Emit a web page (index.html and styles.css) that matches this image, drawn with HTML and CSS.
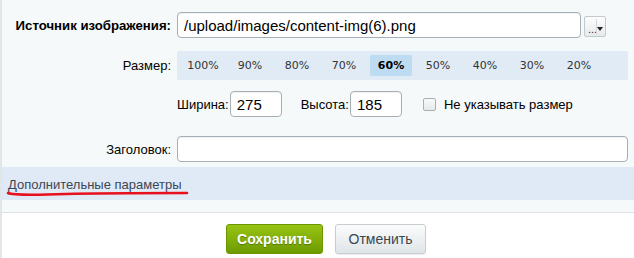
FILE: index.html
```html
<!DOCTYPE html>
<html lang="ru">
<head>
  <meta charset="UTF-8">
  <title>Изображение</title>
  <link rel="stylesheet" href="styles.css">
</head>
<body>
  <div class="dialog">
    <div class="form">
      <div class="row row-src">
        <label class="label label-bold">Источник изображения:</label>
        <div class="field field-src">
          <input type="text" class="input input-src" value="/upload/images/content-img(6).png">
          <button class="browse"><span class="dots">...</span><span class="arrow"></span></button>
        </div>
      </div>

      <div class="row row-size">
        <label class="label">Размер:</label>
        <div class="sizes">
          <span class="size">100%</span>
          <span class="size">90%</span>
          <span class="size">80%</span>
          <span class="size">70%</span>
          <span class="size active">60%</span>
          <span class="size">50%</span>
          <span class="size">40%</span>
          <span class="size">30%</span>
          <span class="size">20%</span>
        </div>
      </div>

      <div class="row row-dims">
        <span></span>
        <div class="dims">
          <span class="dim-label">Ширина:</span>
          <input type="text" class="input input-small" value="275">
          <span class="dim-label dim-gap">Высота:</span>
          <input type="text" class="input input-small" value="185">
          <label class="check"><span class="box"></span>Не указывать размер</label>
        </div>
      </div>

      <div class="row row-title">
        <label class="label">Заголовок:</label>
        <input type="text" class="input input-title">
      </div>
    </div>

    <div class="more">
      <a class="more-link">Дополнительные параметры</a>
      <svg class="mark" width="184" height="8" viewBox="0 0 184 8">
        <path d="M2 3 C 6 5, 30 5, 60 4 S 150 3, 181 3" stroke="#e8101e" stroke-width="2.6" fill="none" stroke-linecap="round"/>
      </svg>
    </div>

    <div class="footer">
      <button class="btn btn-save">Сохранить</button>
      <button class="btn btn-cancel">Отменить</button>
    </div>
  </div>
</body>
</html>
```

FILE: styles.css
```css
body {
  margin: 0;
  font-family: "Liberation Sans", Arial, sans-serif;
  font-size: 13px;
  color: #000;
  background: #fff;
}

.dialog {
  border-left: 2px solid #e1e6e8;
  height: 258px;
  box-sizing: border-box;
}

.form {
  background: #f5f9f9;
  padding: 12px 6px 5px 0;
}

.row {
  display: grid;
  grid-template-columns: 169px 1fr;
  column-gap: 6px;
  align-items: center;
}

.label {
  text-align: right;
  color: #000;
  font-size: 13px;
}

.label-bold {
  font-weight: bold;
  font-size: 13.2px;
}

.input {
  height: 26px;
  box-sizing: border-box;
  border: 1px solid #a6aeb6;
  border-radius: 4px;
  background: #fff;
  font-family: "Liberation Sans", Arial, sans-serif;
  font-size: 15px;
  padding: 0 6px;
  color: #000;
  box-shadow: inset 0 1px 1px rgba(0, 0, 0, 0.06);
}

.field-src {
  display: flex;
  align-items: center;
  gap: 3px;
}

.input-src {
  width: 404px;
}

.browse {
  width: 22px;
  height: 21px;
  margin-top: 2px;
  padding: 0;
  border: 1px solid #c3c9cc;
  border-radius: 2px;
  background: linear-gradient(#fdfdfd, #e7eaeb);
  display: flex;
  align-items: flex-end;
  position: relative;
}

.dots {
  font-size: 11px;
  line-height: 14px;
  padding-left: 3px;
  color: #333;
}

.arrow {
  position: absolute;
  right: 2px;
  top: 10px;
  border-left: 3px solid transparent;
  border-right: 3px solid transparent;
  border-top: 4px solid #222;
}

.browse::after {
  content: "";
  position: absolute;
  right: 8px;
  top: 2px;
  bottom: 2px;
  border-left: 1px solid #d3d8da;
}

.row-size {
  margin-top: 13px;
}

.sizes {
  background: #e0ebf6;
  height: 29px;
  display: flex;
  align-items: center;
  padding-left: 5px;
  gap: 5px;
  border-radius: 2px;
  font-family: "DejaVu Sans", Verdana, sans-serif;
  font-size: 11px;
  color: #333;
}

.size {
  width: 42px;
  text-align: center;
  line-height: 21px;
  border-radius: 2px;
}

.size.active {
  background: #bddcf2;
  font-weight: bold;
  color: #000;
}

.row-dims {
  margin-top: 11px;
}

.dims {
  display: flex;
  align-items: center;
}

.dim-label {
  font-size: 13px;
  margin-right: 1px;
}

.dim-gap {
  margin-left: 19px;
}

.input-small {
  width: 52px;
}

.check {
  display: flex;
  align-items: center;
  margin-left: 21px;
  font-size: 13px;
}

.box {
  width: 11px;
  height: 11px;
  border: 1px solid #a9b0b4;
  border-radius: 2px;
  background: linear-gradient(#fafafa, #e6e9ea);
  margin-right: 8px;
}

.row-title {
  margin-top: 19px;
}

.input-title {
  width: 451px;
}

.more {
  background: #dfeaf6;
  height: 33px;
  position: relative;
  padding-left: 6px;
  border-bottom: 12px solid #f5f9f9;
}

.more-link {
  display: inline-block;
  margin-top: 10px;
  font-size: 13px;
  color: #3d4656;
}

.mark {
  position: absolute;
  left: 4px;
  top: 23px;
}

.footer {
  border-top: 1px solid #dde3e5;
  display: flex;
  justify-content: center;
  gap: 12px;
  padding-top: 11px;
  padding-left: 16px;
}

.btn {
  height: 30px;
  border-radius: 3px;
  font-family: "Liberation Sans", Arial, sans-serif;
  font-size: 14px;
  padding: 0 10px;
}

.btn-save {
  width: 97px;
  border: 1px solid #6a9600;
  background: linear-gradient(#98c413, #6e9b00);
  color: #fff;
  font-weight: bold;
  text-shadow: 0 1px 1px rgba(0, 0, 0, 0.3);
}

.btn-cancel {
  width: 91px;
  border: 1px solid #c6ced2;
  background: linear-gradient(#fbfcfc, #dfe5e8);
  color: #3a4750;
  box-shadow: 0 1px 1px rgba(0, 0, 0, 0.08);
}
```
